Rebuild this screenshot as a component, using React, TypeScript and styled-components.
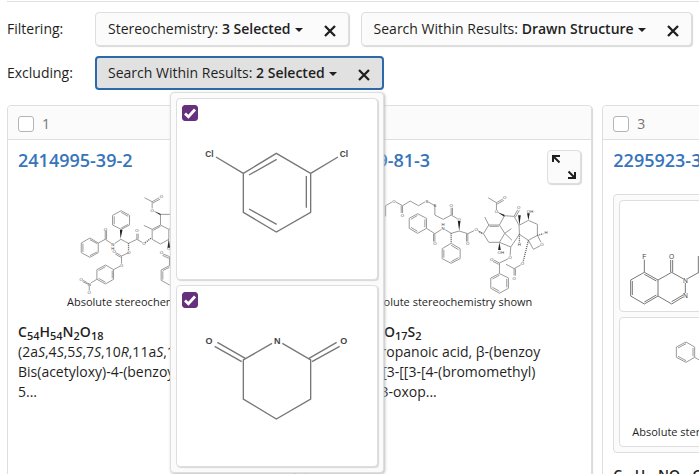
import React from "react";
import styled, { createGlobalStyle, css } from "styled-components";

const GlobalStyle = createGlobalStyle`
  * { box-sizing: border-box; }
  body {
    margin: 0;
    background: #fff;
    color: #1f1f1f;
    font-family: "Open Sans", "Noto Sans", sans-serif;
    font-size: 14px;
    line-height: 20px;
  }
  button, input { font: inherit; color: inherit; }
`;

const Page = styled.main`
  height: 100vh;
  overflow: hidden;
  padding: 1px 0 0 7px;
`;

const Filters = styled.section`
  display: flex;
  flex-direction: column;
  gap: 10px;
  padding: 10px 0 15px;
  border-top: 1px solid #e0e0e0;
`;

const FilterRow = styled.div`
  display: flex;
  align-items: center;
`;

const FilterLabel = styled.span`
  flex: 0 0 88px;
`;

const Chips = styled.div`
  display: flex;
  gap: 12px;
`;

const Chip = styled.div<{ $active?: boolean }>`
  position: relative;
  display: flex;
  flex-shrink: 0;
  height: 34px;
  border: 1px solid #dedede;
  border-radius: 4px;
  background: #fbfbfb;
  box-shadow: 1px 1px 1px #d8d8d8;
  ${(p) =>
    p.$active &&
    css`
      border: 2px solid #2c69a8;
      background: #e1e1e1;
      box-shadow: none;
    `}
`;

const ChipButton = styled.button<{ $active?: boolean }>`
  display: flex;
  align-items: center;
  gap: 3px;
  padding: 0 0 0 ${(p) => (p.$active ? 11 : 12)}px;
  border: 0;
  background: none;
  white-space: nowrap;
  cursor: pointer;
  b { font-weight: 600; }
`;

const RemoveButton = styled.button`
  display: flex;
  align-items: center;
  padding: 4px 12px 0 20px;
  border: 0;
  background: none;
  cursor: pointer;
`;

const Menu = styled.div`
  position: absolute;
  z-index: 2;
  top: calc(100% + 4px);
  right: -2px;
  display: flex;
  flex-direction: column;
  gap: 5px;
  width: 214px;
  padding: 5px;
  border: 1px solid #dedede;
  border-radius: 4px;
  background: #fbfbfb;
  box-shadow: 1px 1px 3px #bbb;
`;

const MenuItem = styled.label`
  display: grid;
  border: 1px solid #dedede;
  border-radius: 4px;
  background: #fff;
  box-shadow: 1px 1px 1px #d8d8d8;
  > * { grid-area: 1 / 1; }
  > svg { width: 100%; height: 180px; }
`;

const CheckWrap = styled.span`
  display: grid;
  place-items: center;
  align-self: start;
  justify-self: start;
  margin: 6px 5px;
  > * { grid-area: 1 / 1; }
  svg { pointer-events: none; }
`;

const Checkbox = styled.input`
  appearance: none;
  width: 16px;
  height: 16px;
  margin: 0;
  border: 1px solid #b5b5b5;
  border-radius: 3px;
  background: #fff;
  &:checked {
    border-color: #66307c;
    background: #66307c;
  }
`;

const Results = styled.section`
  display: grid;
  grid-template-columns: repeat(3, 1fr);
  gap: 10px;
  min-width: 883px;
`;

const Card = styled.article`
  min-width: 0;
  min-height: 420px;
  border: 1px solid #dedede;
  border-radius: 4px;
  background: #fff;
  box-shadow: 1px 1px 1px #d8d8d8;
`;

const CardHeader = styled.label`
  display: flex;
  align-items: center;
  gap: 8px;
  height: 34px;
  padding: 2px 10px 0;
  border-bottom: 1px solid #dedede;
  border-radius: 4px 4px 0 0;
  background: #fbfbfb;
  color: #757575;
`;

const CardBody = styled.div`
  padding: 10px 10px 20px;
`;

const TitleBar = styled.div`
  display: flex;
  align-items: flex-start;
  justify-content: space-between;
  height: 44px;
`;

const RegistryLink = styled.a`
  color: #3775bb;
  font-size: 18px;
  font-weight: 600;
  text-decoration: none;
`;

const ExpandButton = styled.button`
  display: grid;
  place-items: center;
  width: 34px;
  height: 34px;
  padding: 0;
  border: 1px solid #dedede;
  border-radius: 4px;
  background: #fbfbfb;
  box-shadow: 1px 1px 1px #d8d8d8;
`;

const Structure = styled.figure`
  margin: 0 0 12px;
  text-align: center;
  svg { display: block; width: 100%; height: 100px; }
`;

const Caption = styled.figcaption`
  font-size: 11px;
  line-height: 16px;
  white-space: nowrap;
`;

const Formula = styled.div`
  font-weight: 600;
  white-space: nowrap;
  sub { font-size: 11px; line-height: 0; vertical-align: -3px; }
`;

const Description = styled.div`
  white-space: nowrap;
`;

const Components = styled.div`
  display: flex;
  flex-direction: column;
  gap: 5px;
  margin-bottom: 12px;
  padding: 5px;
  border: 1px solid #dedede;
  border-radius: 4px;
  background: #fbfbfb;
`;

const ComponentBox = styled.figure`
  margin: 0;
  border: 1px solid #dedede;
  border-radius: 4px;
  background: #fff;
  overflow: hidden;
  svg { display: block; width: 100%; height: 110px; }
  svg:not(:last-child) { height: 106px; }
  svg + figcaption { padding: 0 12px 6px; }
`;

const Caret = () => (
  <svg width="10" height="6" viewBox="0 0 10 6" aria-hidden="true">
    <path d="M1 2h8L5 6z" fill="#1f1f1f" />
  </svg>
);

const Cross = () => (
  <svg width="12" height="12" viewBox="0 0 12 12" aria-hidden="true">
    <path d="M1 1l10 10M11 1L1 11" stroke="#1f1f1f" strokeWidth="2.3" />
  </svg>
);

const Tick = () => (
  <svg width="14" height="14" viewBox="0 0 14 14" fill="none" aria-hidden="true">
    <path d="M2 7.5l3.4 3.2L12 3.5" stroke="#fff" strokeWidth="2.8" />
  </svg>
);

const ExpandIcon = () => (
  <svg width="26" height="26" viewBox="0 0 26 26" fill="none" stroke="#1f1f1f" strokeWidth="2" aria-hidden="true">
    <path d="M9 2H2v6M2 2l6.5 6.5M17 24h7v-6M24 24l-6.5-6.5" />
  </svg>
);

type Label = [string, number, number];

const Labels = ({ items, size }: { items: Label[]; size: number }) => (
  <g fontFamily="Liberation Sans, sans-serif" fontSize={size} fill="#444" textAnchor="middle" stroke="none">
    {items.map(([t, x, y], i) => (
      <text key={i} x={x} y={y}>{t}</text>
    ))}
  </g>
);

const Dichlorobenzene = () => (
  <svg viewBox="21 27 600 540" fill="none" stroke="#777" strokeWidth="4" aria-label="1,3-Dichlorobenzene">
    <path d="M220 250L319 190L422 250V367L319 426L220 367ZM220 250L138 201M422 250L504 201M237 255L320 208M409 258V353M320 403L237 357" />
    <g fontWeight="700"><Labels size={25} items={[["Cl", 118, 200], ["Cl", 522, 200]]} /></g>
  </svg>
);

const Glutarimide = () => (
  <svg viewBox="21 18 600 540" fill="none" stroke="#777" strokeWidth="4" aria-label="Glutarimide">
    <path d="M306 190L220 240V357L319 417L422 357V240L337 190M226 235L142 187M215 245L134 199M417 235L500 187M426 245L509 199" />
    <g fontWeight="700"><Labels size={27} items={[["O", 117, 193], ["N", 322, 193], ["O", 521, 193]]} /></g>
  </svg>
);

const NitrophenylTaxane = () => (
  <svg viewBox="-156 24 798 300" fill="none" stroke="#9a9a9a" strokeWidth="3">
    <path d="M224 35L247 47L268 35M249 51L271 39M247 47V67M272 85H310M272 85V117L247 130V160L272 174L297 160V130L272 117M250 133L272 121M247 130L222 118M297 130L310 122M217 169L201 160V143M205 160V143M201 160L176 172L153 160L135 172M124 172L106 160V134M110 160V134M106 160L85 171L60 156L34 171V200L60 214L85 200V171M82 173L60 161M39 173V198M60 209L81 198" />
    <path d="M154 74L179 88V117L154 130L128 117V88ZM154 79L175 91M175 115L154 126M133 115V91M177 200L155 210L138 200M153 214L136 204M155 210V233M150 241L131 251L107 237L81 251V280L107 294L131 280V251M107 242L86 254M86 277L107 289M127 277V254M81 280L63 291M53 291L40 283M55 295L38 287M58 299V314" />
    <path d="M280 204L299 212V239L274 252V283L299 297L324 283V252L299 239M278 208L297 217M279 256V281M299 244L279 254" />
    <path d="M176 172V194M243 157L226 170" stroke="#555" strokeDasharray="3 3" strokeWidth="4" />
    <path d="M152 158L150 131H158ZM250 74L272 83V88ZM297 158L293 185H301Z" fill="#222" stroke="none" />
    <Labels size={13} items={[["O", 275, 37], ["O", 247, 77], ["O", 222, 177], ["O", 201, 139], ["O", 107, 134], ["N", 129, 180], ["H", 129, 191], ["O", 177, 205], ["O", 133, 202], ["O", 155, 244], ["N", 58, 300], ["O", 34, 285], ["O", 58, 324], ["O", 275, 205], ["O", 297, 192]]} />
  </svg>
);

const BromomethylTaxane = () => (
  <svg viewBox="-195 39 798 300" fill="none" stroke="#9a9a9a" strokeWidth="3">
    <path d="M14 106V74L33 63M45 63L65 74V96M61 74V96M65 74L88 60L113 74L133 62M143 63L162 74V102L187 115L211 102V80M215 102V80M211 102L230 113M235 150L211 157L193 146M181 146L162 158V182M158 158V182M162 158L137 142V112L110 98L85 112V142L110 157L137 142M132 139V115M110 103L90 115M90 139L110 151" />
    <path d="M235 150L261 158V182M257 158V182M261 158L280 149M291 149L308 158L324 132H356L372 157L356 184H324L308 158M326 136H354M324 132L312 108M356 132L371 104L400 106L415 133L416 160L390 198L356 184M400 106L411 86M404 108L416 88M372 157L392 143M372 157L394 178M347 87V65L366 54M349 69L369 58M347 65L322 50" />
    <path d="M415 133L443 118L470 130V163L443 178L416 160M470 163L481 184M479 194L458 205L443 178M211 187L238 203V233L211 247L184 233V203ZM211 193L233 206M233 230L211 242M189 230V206M390 198L388 224M383 233L356 246L339 237M354 250L336 241M356 246V278L383 291V322L356 337L330 322V291L356 278M378 294V319M356 331L335 319M335 294L356 283M420 252L400 263V284M404 263V284M400 263L376 250" />
    <path d="M211 157V187M443 178L427 243M470 163L488 158M303 157L294 151M416 160V185" stroke="#555" strokeDasharray="3 3" strokeWidth="4" />
    <path d="M235 150L231 120H239ZM349 93L371 101V107ZM416 133L412 103H420ZM443 118L439 97H447ZM356 184L352 207H360Z" fill="#222" stroke="none" />
    <Labels size={13} items={[["O", 39, 65], ["O", 65, 108], ["S", 138, 65], ["S", 162, 79], ["O", 211, 79], ["O", 235, 120], ["N", 187, 146], ["H", 187, 136], ["O", 162, 193], ["O", 261, 193], ["O", 286, 151], ["O", 347, 97], ["O", 372, 55], ["O", 414, 84], ["OH", 448, 95], ["H", 496, 160], ["O", 484, 194], ["OH", 360, 218], ["O", 388, 234], ["O", 333, 239], ["O", 425, 253], ["O", 400, 296], ["H", 416, 194]]} />
  </svg>
);

const Phthalazinone = () => (
  <svg viewBox="75 318 759 330" preserveAspectRatio="xMinYMin slice" fill="none" stroke="#777" strokeWidth="3">
    <path d="M148 494V532L189 555V603L148 627L107 603V555L148 532M148 538L184 558M184 600L148 621M112 600V558M189 555L230 532L264 551M227 532V495M233 532V495M271 564V594M264 606L230 627L189 603M264 600L230 620M278 551L310 533V483M310 533L352 557V603L393 627" />
    <Labels size={20} items={[["F", 148, 492], ["O", 230, 492], ["N", 271, 563], ["N", 271, 610]]} />
  </svg>
);

const PhenylFragment = () => (
  <svg viewBox="75 54 759 318" preserveAspectRatio="xMinYMin slice" fill="none" stroke="#9a9a9a" strokeWidth="3">
    <path d="M273 126L299 141V172L273 187L244 172V141ZM273 131L249 144M249 169L273 182M294 169V144M299 172L325 187" />
  </svg>
);

type FilterChipProps = {
  name: string;
  value: string;
  active?: boolean;
  children?: React.ReactNode;
};

const FilterChip = ({ name, value, active, children }: FilterChipProps) => (
  <Chip $active={active}>
    <ChipButton $active={active} type="button" aria-expanded={!!active}>
      <span>{name}: <b>{value}</b></span>
      <Caret />
    </ChipButton>
    <RemoveButton type="button" aria-label={`Remove ${name}`}>
      <Cross />
    </RemoveButton>
    {children}
  </Chip>
);

const StructureOption = ({ children }: { children: React.ReactNode }) => (
  <MenuItem>
    {children}
    <CheckWrap>
      <Checkbox type="checkbox" defaultChecked />
      <Tick />
    </CheckWrap>
  </MenuItem>
);

type ResultCardProps = {
  index: number;
  registry: string;
  children: React.ReactNode;
};

const ResultCard = ({ index, registry, children }: ResultCardProps) => (
  <Card>
    <CardHeader>
      <Checkbox type="checkbox" />
      {index}
    </CardHeader>
    <CardBody>
      <TitleBar>
        <RegistryLink href="#">{registry}</RegistryLink>
        <ExpandButton type="button" aria-label="Expand structure">
          <ExpandIcon />
        </ExpandButton>
      </TitleBar>
      {children}
    </CardBody>
  </Card>
);

export default function App() {
  return (
    <>
      <GlobalStyle />
      <Page>
        <Filters>
          <FilterRow>
            <FilterLabel>Filtering:</FilterLabel>
            <Chips>
              <FilterChip name="Stereochemistry" value="3 Selected" />
              <FilterChip name="Search Within Results" value="Drawn Structure" />
            </Chips>
          </FilterRow>
          <FilterRow>
            <FilterLabel>Excluding:</FilterLabel>
            <Chips>
              <FilterChip name="Search Within Results" value="2 Selected" active>
                <Menu>
                  <StructureOption><Dichlorobenzene /></StructureOption>
                  <StructureOption><Glutarimide /></StructureOption>
                </Menu>
              </FilterChip>
            </Chips>
          </FilterRow>
        </Filters>
        <Results>
          <ResultCard index={1} registry="2414995-39-2">
            <Structure>
              <NitrophenylTaxane />
              <Caption>Absolute stereochemistry shown</Caption>
            </Structure>
            <Formula>C<sub>54</sub>H<sub>54</sub>N<sub>2</sub>O<sub>18</sub></Formula>
            <Description>
              (2a<i>S</i>,4<i>S</i>,5<i>S</i>,7<i>S</i>,10<i>R</i>,11a<i>S</i>,12<i>S</i>)-<br />
              Bis(acetyloxy)-4-(benzoyloxy)-<br />
              5...
            </Description>
          </ResultCard>
          <ResultCard index={2} registry="2414989-81-3">
            <Structure>
              <BromomethylTaxane />
              <Caption>Absolute stereochemistry shown</Caption>
            </Structure>
            <Formula>C<sub>64</sub>H<sub>70</sub>ClNO<sub>17</sub>S<sub>2</sub></Formula>
            <Description>
              Benzenepropanoic acid, β-(benzoy<br />
              lamino)-α-[3-[[3-[4-(bromomethyl)<br />
              phenyl]-1,3-oxop...
            </Description>
          </ResultCard>
          <ResultCard index={3} registry="2295923-33-2">
            <Components>
              <ComponentBox><Phthalazinone /></ComponentBox>
              <ComponentBox>
                <PhenylFragment />
                <Caption>Absolute stereochemistry shown, Rotation (-)</Caption>
              </ComponentBox>
            </Components>
            <Formula>C<sub>47</sub>H<sub>54</sub>NO<sub>14</sub>O<sub>2</sub></Formula>
          </ResultCard>
        </Results>
      </Page>
    </>
  );
}
